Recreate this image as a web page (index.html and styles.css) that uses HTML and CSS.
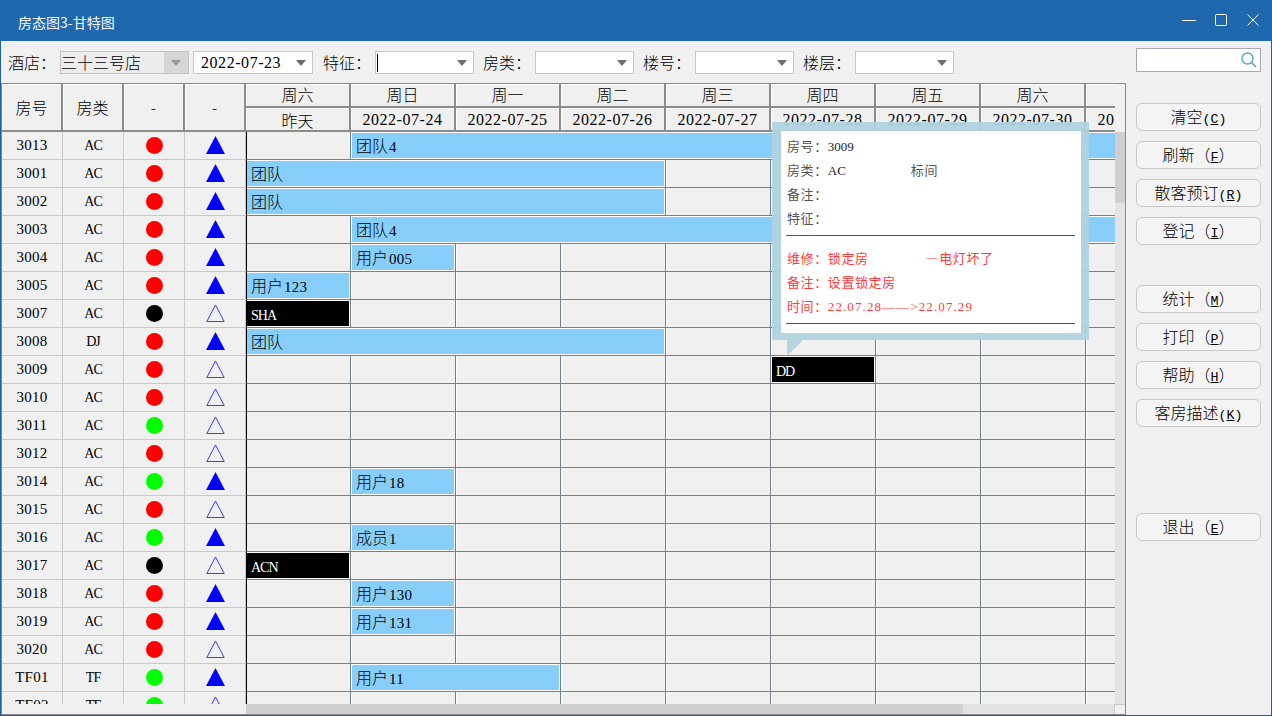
FILE: index.html
```
<!DOCTYPE html>
<html lang="zh-CN">
<head>
<meta charset="utf-8">
<title>房态图3-甘特图</title>
<link rel="stylesheet" href="styles.css">
</head>
<body>
<svg class="defs" width="0" height="0" aria-hidden="true">
  <symbol id="up" viewBox="0 0 19 18"><path d="M9.5 0 19 18H0z" fill="#0000ff"/></symbol>
  <symbol id="hollow" viewBox="0 0 19 18"><path d="M9.5 1 18.2 17.5H.8z" fill="none" stroke="#3a3aff"/></symbol>
  <symbol id="caret" viewBox="0 0 10 6"><path d="M0 0h10L5 6z" fill="#6b6f6b"/></symbol>
</svg>
<div class="window">
  <header class="titlebar">
    <span class="title">房态图3-甘特图</span>
    <div class="winctl">
      <svg width="16" height="16" viewBox="0 0 16 16"><path d="M1 8.5h14" stroke="#fff" fill="none"/></svg>
      <svg width="16" height="16" viewBox="0 0 16 16"><rect x="2.5" y="2.5" width="11" height="11" rx="1" stroke="#fff" fill="none"/></svg>
      <svg width="16" height="16" viewBox="0 0 16 16"><path d="M2.5 2.5l11 11M13.5 2.5l-11 11" stroke="#fff" fill="none"/></svg>
    </div>
  </header>
  <div class="content">
    <div class="left">
      <div class="toolbar">
        <label class="lab">酒店：</label>
        <div class="sel sel-hotel"><span class="val">三十三号店</span><span class="drop"><svg class="car"><use href="#caret"/></svg></span></div>
        <div class="sel sel-date"><span class="val mono">2022-07-23</span><svg class="car"><use href="#caret"/></svg></div>
        <label class="lab gap">特征：</label>
        <div class="sel sel-m"><span class="cursor"></span><svg class="car"><use href="#caret"/></svg></div>
        <label class="lab gap">房类：</label>
        <div class="sel sel-m"><span></span><svg class="car"><use href="#caret"/></svg></div>
        <label class="lab gap">楼号：</label>
        <div class="sel sel-m"><span></span><svg class="car"><use href="#caret"/></svg></div>
        <label class="lab gap">楼层：</label>
        <div class="sel sel-m"><span></span><svg class="car"><use href="#caret"/></svg></div>
      </div>
      <div class="gantt">
        <div class="gantt-top">
          <div class="viewport">
            <div class="head">
              <div class="hc tall">房号</div><div class="hc tall">房类</div><div class="hc tall">-</div><div class="hc tall">-</div>
              <div class="hc up1">周六</div><div class="hc up1">周日</div><div class="hc up1">周一</div><div class="hc up1">周二</div><div class="hc up1">周三</div><div class="hc up1">周四</div><div class="hc up1">周五</div><div class="hc up1">周六</div><div class="hc up1"></div>
              <div class="hc dn1">昨天</div><div class="hc dn1 mono">2022-07-24</div><div class="hc dn1 mono">2022-07-25</div><div class="hc dn1 mono">2022-07-26</div><div class="hc dn1 mono">2022-07-27</div><div class="hc dn1 mono">2022-07-28</div><div class="hc dn1 mono">2022-07-29</div><div class="hc dn1 mono">2022-07-30</div><div class="hc dn1 mono">2022-07-31</div>
            </div>
            <div class="row"><div class="rc mono">3013</div><div class="rc ty">AC</div><div class="rc"><i class="dot red"></i></div><div class="rc"><svg class="tri"><use href="#up"/></svg></div><div class="lane"><div class="bar c2 s8">团队<b>4</b></div></div></div>
            <div class="row"><div class="rc mono">3001</div><div class="rc ty">AC</div><div class="rc"><i class="dot red"></i></div><div class="rc"><svg class="tri"><use href="#up"/></svg></div><div class="lane"><div class="bar c1 s4">团队</div></div></div>
            <div class="row"><div class="rc mono">3002</div><div class="rc ty">AC</div><div class="rc"><i class="dot red"></i></div><div class="rc"><svg class="tri"><use href="#up"/></svg></div><div class="lane"><div class="bar c1 s4">团队</div></div></div>
            <div class="row"><div class="rc mono">3003</div><div class="rc ty">AC</div><div class="rc"><i class="dot red"></i></div><div class="rc"><svg class="tri"><use href="#up"/></svg></div><div class="lane"><div class="bar c2 s8">团队<b>4</b></div></div></div>
            <div class="row"><div class="rc mono">3004</div><div class="rc ty">AC</div><div class="rc"><i class="dot red"></i></div><div class="rc"><svg class="tri"><use href="#up"/></svg></div><div class="lane"><div class="bar c2">用户<b>005</b></div></div></div>
            <div class="row"><div class="rc mono">3005</div><div class="rc ty">AC</div><div class="rc"><i class="dot red"></i></div><div class="rc"><svg class="tri"><use href="#up"/></svg></div><div class="lane"><div class="bar c1">用户<b>123</b></div></div></div>
            <div class="row"><div class="rc mono">3007</div><div class="rc ty">AC</div><div class="rc"><i class="dot black"></i></div><div class="rc"><svg class="tri"><use href="#hollow"/></svg></div><div class="lane"><div class="bar dark c1"><b>SHA</b></div></div></div>
            <div class="row"><div class="rc mono">3008</div><div class="rc ty">DJ</div><div class="rc"><i class="dot red"></i></div><div class="rc"><svg class="tri"><use href="#up"/></svg></div><div class="lane"><div class="bar c1 s4">团队</div></div></div>
            <div class="row"><div class="rc mono">3009</div><div class="rc ty">AC</div><div class="rc"><i class="dot red"></i></div><div class="rc"><svg class="tri"><use href="#hollow"/></svg></div><div class="lane"><div class="bar dark c6"><b>DD</b></div></div></div>
            <div class="row"><div class="rc mono">3010</div><div class="rc ty">AC</div><div class="rc"><i class="dot red"></i></div><div class="rc"><svg class="tri"><use href="#hollow"/></svg></div><div class="lane"></div></div>
            <div class="row"><div class="rc mono">3011</div><div class="rc ty">AC</div><div class="rc"><i class="dot green"></i></div><div class="rc"><svg class="tri"><use href="#hollow"/></svg></div><div class="lane"></div></div>
            <div class="row"><div class="rc mono">3012</div><div class="rc ty">AC</div><div class="rc"><i class="dot red"></i></div><div class="rc"><svg class="tri"><use href="#hollow"/></svg></div><div class="lane"></div></div>
            <div class="row"><div class="rc mono">3014</div><div class="rc ty">AC</div><div class="rc"><i class="dot green"></i></div><div class="rc"><svg class="tri"><use href="#up"/></svg></div><div class="lane"><div class="bar c2">用户<b>18</b></div></div></div>
            <div class="row"><div class="rc mono">3015</div><div class="rc ty">AC</div><div class="rc"><i class="dot red"></i></div><div class="rc"><svg class="tri"><use href="#hollow"/></svg></div><div class="lane"></div></div>
            <div class="row"><div class="rc mono">3016</div><div class="rc ty">AC</div><div class="rc"><i class="dot green"></i></div><div class="rc"><svg class="tri"><use href="#up"/></svg></div><div class="lane"><div class="bar c2">成员<b>1</b></div></div></div>
            <div class="row"><div class="rc mono">3017</div><div class="rc ty">AC</div><div class="rc"><i class="dot black"></i></div><div class="rc"><svg class="tri"><use href="#hollow"/></svg></div><div class="lane"><div class="bar dark c1"><b>ACN</b></div></div></div>
            <div class="row"><div class="rc mono">3018</div><div class="rc ty">AC</div><div class="rc"><i class="dot red"></i></div><div class="rc"><svg class="tri"><use href="#up"/></svg></div><div class="lane"><div class="bar c2">用户<b>130</b></div></div></div>
            <div class="row"><div class="rc mono">3019</div><div class="rc ty">AC</div><div class="rc"><i class="dot red"></i></div><div class="rc"><svg class="tri"><use href="#up"/></svg></div><div class="lane"><div class="bar c2">用户<b>131</b></div></div></div>
            <div class="row"><div class="rc mono">3020</div><div class="rc ty">AC</div><div class="rc"><i class="dot red"></i></div><div class="rc"><svg class="tri"><use href="#hollow"/></svg></div><div class="lane"></div></div>
            <div class="row"><div class="rc mono">TF01</div><div class="rc ty">TF</div><div class="rc"><i class="dot green"></i></div><div class="rc"><svg class="tri"><use href="#up"/></svg></div><div class="lane"><div class="bar c2 s2">用户<b>11</b></div></div></div>
            <div class="row"><div class="rc mono">TF02</div><div class="rc ty">TF</div><div class="rc"><i class="dot green"></i></div><div class="rc"><svg class="tri"><use href="#hollow"/></svg></div><div class="lane"></div></div>
          </div>
          <div class="vbar"><div class="vthumb"></div></div>
        </div>
        <div class="hbar"><div class="hblank"></div><div class="htrack"><div class="hthumb"></div></div><div class="hcorner"></div></div>
      </div>
    </div>
    <aside class="side">
      <div class="search"><svg width="18" height="18" viewBox="0 0 18 18"><circle cx="7.5" cy="7.5" r="5.5" fill="none" stroke="#5aa5cc" stroke-width="1.4"/><path d="M11.5 11.5l4.5 4.5" stroke="#5aa5cc" stroke-width="1.6"/></svg></div>
      <div class="btns">
        <button class="btn">清空<b>(<u>C</u>)</b></button>
        <button class="btn">刷新（<b><u>F</u></b>）</button>
        <button class="btn">散客预订<b>(<u>R</u>)</b></button>
        <button class="btn">登记（<b><u>I</u></b>）</button>
      </div>
      <div class="btns mid">
        <button class="btn">统计（<b><u>M</u></b>）</button>
        <button class="btn">打印（<b><u>P</u></b>）</button>
        <button class="btn">帮助（<b><u>H</u></b>）</button>
        <button class="btn">客房描述<b>(<u>K</u>)</b></button>
      </div>
      <div class="btns last">
        <button class="btn">退出（<b><u>E</u></b>）</button>
      </div>
    </aside>
  </div>
  <div class="tip">
    <div class="tip-body">
      <div class="tl">房号：<b>3009</b></div>
      <div class="tl">房类：<b class="w-ac">AC</b><span>标间</span></div>
      <div class="tl">备注：</div>
      <div class="tl">特征：</div>
      <hr class="rule">
      <div class="tl redt">维修：锁定房<span class="note">—电灯坏了</span></div>
      <div class="tl redt">备注：设置锁定房</div>
      <div class="tl redt">时间：<b>22.07.28——&gt;22.07.29</b></div>
      <hr class="rule">
    </div>
  </div>
</div>
</body>
</html>
```

FILE: styles.css
```
* { box-sizing: border-box; }
html, body { margin: 0; padding: 0; }
body { width: 1272px; height: 716px; overflow: hidden; background: #f0f0f0; font-family: "Noto Sans CJK SC", "Noto Sans", sans-serif; font-size: 16px; font-weight: 300; color: #000; }
.defs { position: absolute; }
.window { position: relative; width: 1272px; height: 716px; display: flex; flex-direction: column; border: 1px solid #1f5f9e; border-top: 0; background: #f0f0f0; }
.mono, b, .ty { font-family: "Liberation Serif", "Noto Sans CJK SC", serif; font-weight: 400; }
.mono { font-size: 16px; letter-spacing: .55px; }

.titlebar { flex: 0 0 41px; background: #2068ae; display: flex; align-items: center; justify-content: space-between; margin: 0 -1px; padding: 2px 11px 0 18px; color: #fff; }
.title { font-size: 14px; font-weight: 400; color: #f2f6fa; }
.winctl { display: flex; gap: 16px; margin-top: -3px; }

.content { flex: 1; display: flex; min-height: 0; }
.left { width: 1125px; display: flex; flex-direction: column; }

.toolbar { flex: 0 0 42px; display: flex; align-items: flex-start; padding: 10px 0 0 7px; }
.lab { width: 52px; height: 23px; line-height: 22px; white-space: nowrap; }
.lab.gap { margin-left: 9px; }
.sel-date + .lab.gap { margin-left: 10px; }
.sel { height: 23px; background: #fff; border: 1px solid #c8c8c8; display: flex; align-items: center; justify-content: space-between; padding: 0 6px 0 0; line-height: 21px; }
.sel-hotel { width: 129px; background: #ececec; padding: 0; border-color: #c4c4c4; }
.sel-hotel .val { white-space: nowrap; }
.drop { width: 24px; height: 21px; background: #d6d6d6; display: flex; align-items: center; justify-content: center; }
.drop .car { opacity: .6; }
.sel-date { width: 120px; margin-left: 4px; }
.sel-date .val { padding-left: 7px; }
.sel-m { width: 99px; }
.car { width: 10px; height: 6px; flex: none; margin-top: 1px; }
.cursor { width: 1px; height: 18px; margin-left: 1px; background: #000; }

.gantt { flex: 1; min-height: 0; display: flex; flex-direction: column; border: 1px solid #8a8a8a; border-left-color: #7f8c99; }
.gantt-top { flex: 1; min-height: 0; display: flex; }
.viewport { flex: 1; min-width: 0; overflow: hidden; }

.head { display: grid; grid-template-columns: repeat(4, 61px) repeat(9, 105px); grid-template-rows: 24px 24px; }
.hc { display: flex; align-items: center; justify-content: center; background: #f0f0f0; border: 1px solid #8c8c8c; border-width: 0 2px 2px 0; box-shadow: inset 1px 1px 0 #fff; white-space: nowrap; line-height: 20px; }
.hc.tall { grid-row: span 2; }
.up1 { padding-bottom: 2px; }
.dn1 { padding-top: 2px; }

.row { display: grid; grid-template-columns: repeat(4, 61px) 945px; height: 28px; }
.rc { display: flex; align-items: center; justify-content: center; border-right: 1px solid #c8c8c8; border-bottom: 1px solid #c8c8c8; }
.rc.mono { font-size: 15px; letter-spacing: .3px; }
.rc.ty { font-size: 14px; letter-spacing: -1px; }
.dot { display: block; width: 17px; height: 17px; border-radius: 50%; }
.red { background: #ff0000; }
.green { background: #00ff00; }
.black { background: #000; }
.tri { width: 19px; height: 18px; margin-top: -1px; }

.lane { display: grid; grid-template-columns: repeat(9, 105px); border-bottom: 1px solid #708090; border-left: 1px solid #000; background-image: linear-gradient(to right, #708090 0 1px, #fff 1px 2px, transparent 2px); background-size: 105px 100%; background-position: 103px 0; }
.bar { grid-row: 1; margin: 1px 3px 0 0; height: 25px; background: #87cefa; box-shadow: 0 -1px #fff, 0 1px #fff, 1px 0 #fff; padding-left: 4px; line-height: 25px; white-space: nowrap; overflow: hidden; }
.bar b { font-size: 15px; margin-left: 1px; letter-spacing: .3px; }
.bar.dark { background: #000; color: #fff; overflow: visible; }
.bar.dark b { font-size: 14px; margin-left: 0; letter-spacing: -1px; }
.c1 { grid-column: 1; }
.c2 { grid-column: 2; }
.c6 { grid-column: 6; }
.s2 { grid-column-end: span 2; }
.s4 { grid-column-end: span 4; }
.s8 { grid-column-end: span 8; margin-right: 0; }

.vbar { flex: 0 0 10px; padding-top: 48px; background: linear-gradient(#f0f0f0 48px, #e3e3e3 48px); }
.vthumb { height: 71px; background: #cfcfcf; border-radius: 0 0 3px 3px; }
.hbar { flex: 0 0 10px; display: flex; }
.hblank { width: 244px; }
.htrack { flex: 1; background: #e3e3e3; }
.hthumb { width: 717px; height: 100%; background: #cfcfcf; border-radius: 0 3px 3px 0; }
.hcorner { width: 11px; background: #f0f0f0; border-left: 1px solid #c8c8c8; border-top: 1px solid #c8c8c8; }

.side { flex: 1; padding: 7px 0 0 10px; display: flex; flex-direction: column; }
.search { width: 125px; height: 24px; background: #fff; border: 1px solid #a8a8b4; display: flex; align-items: center; justify-content: flex-end; padding-right: 2px; }
.btns { display: flex; flex-direction: column; gap: 10px; margin-top: 31px; }
.btns.mid { margin-top: 40px; }
.btns.last { margin-top: 86px; }
.btn { width: 125px; height: 28px; background: #f4f4f4; border: 1px solid #c8c8c8; border-radius: 6px; padding: 0; font-family: inherit; font-size: 16px; font-weight: 300; color: #000; line-height: 24px; white-space: nowrap; }
.btn b { font-family: "Liberation Mono", monospace; font-size: 13.33px; }

.tip { position: absolute; left: 771px; top: 122px; width: 317px; height: 218px; background: rgba(176, 210, 224, .93); padding: 9px 8px 7px 9px; }
.tip::after { content: ""; position: absolute; left: 15px; top: 218px; width: 16px; height: 16px; background: rgba(176, 210, 224, .93); clip-path: polygon(0 0, 100% 0, 0 100%); }
.tip-body { height: 202px; background: #fff; padding: 3px 5px 0 6px; }
.tl { height: 24px; line-height: 24px; font-size: 13px; font-weight: 400; letter-spacing: .6px; color: #555; white-space: nowrap; }
.tl b { font-size: 13px; letter-spacing: 0; color: #222; }
.tl .w-ac { display: inline-block; width: 83px; }
.rule { border: 0; border-top: 1px solid #555; margin: 5px 1px 10px -1px; }
.tl.redt, .tl.redt b { color: #ff3a3a; }
.tl.redt b { letter-spacing: 1.1px; }
.note { margin-left: 57px; }
```
